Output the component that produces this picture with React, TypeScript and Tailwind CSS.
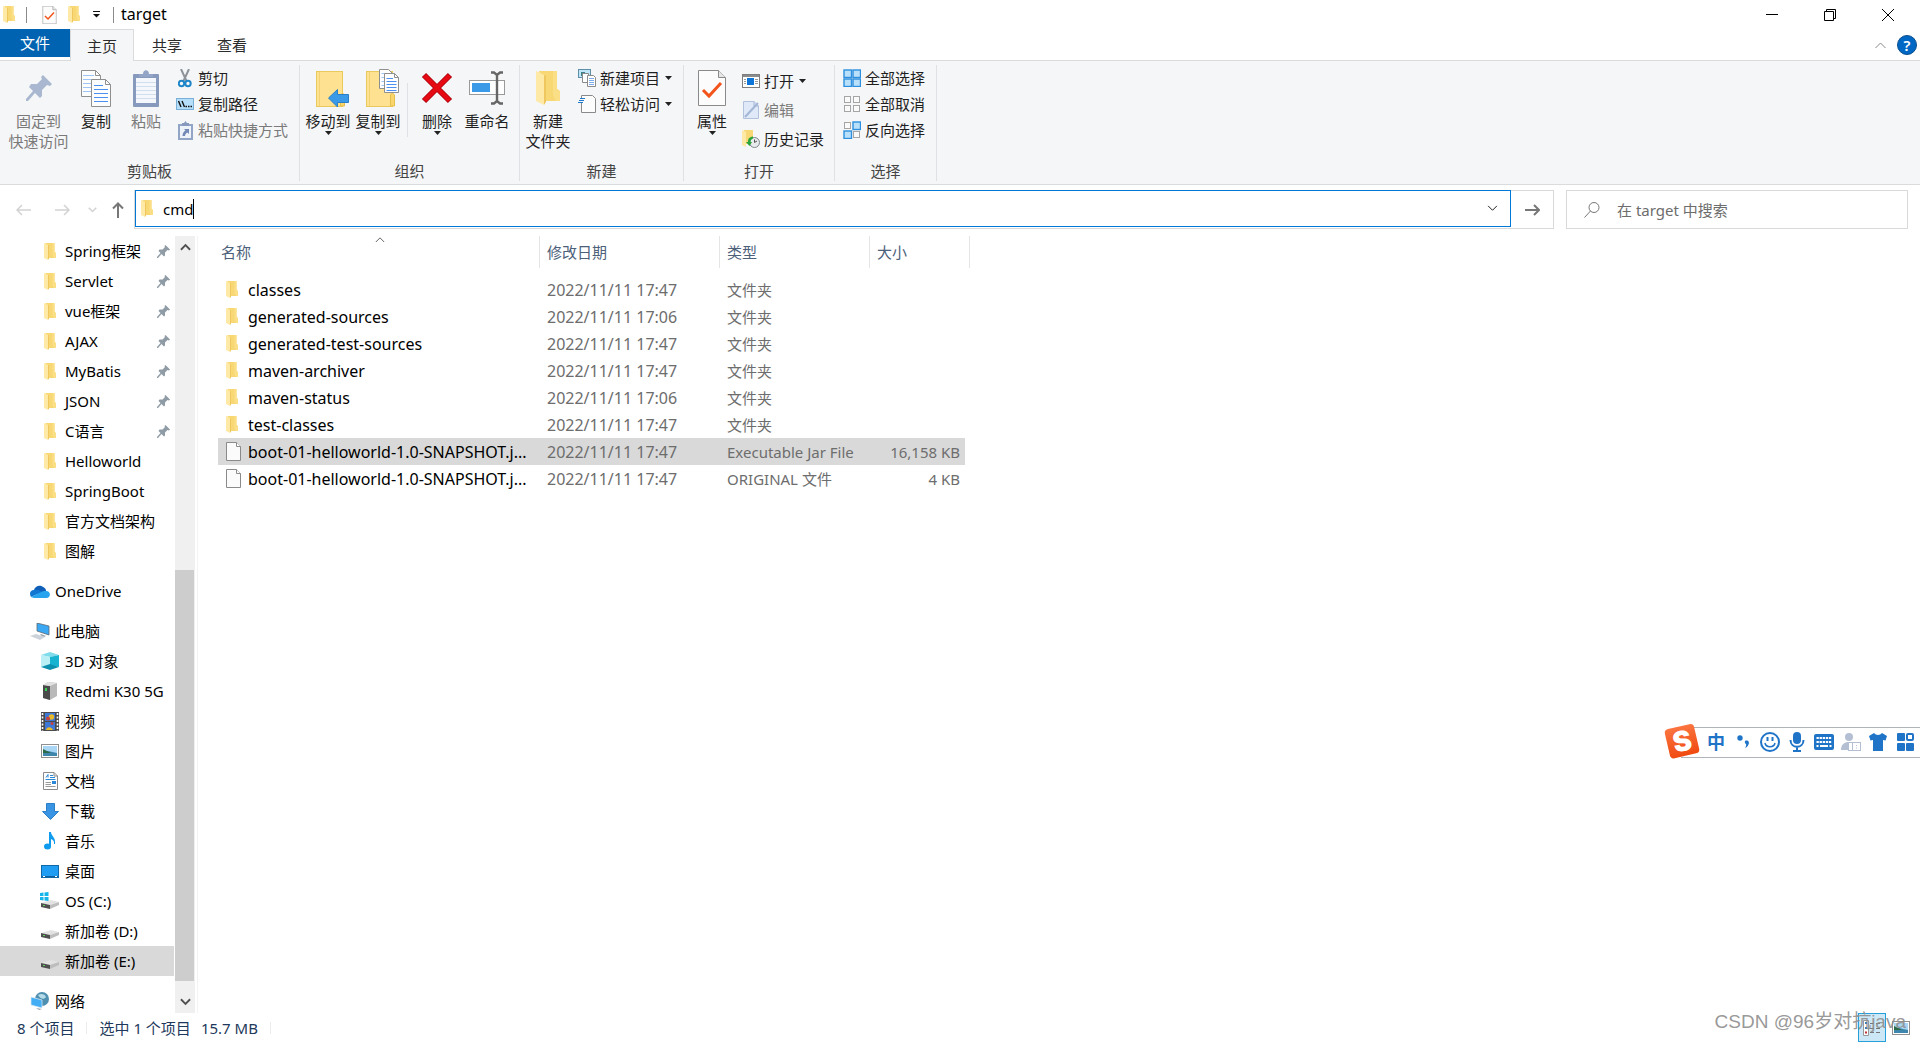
import { useState, type ReactNode } from "react";

type NavItem = {
    name: string;
    icon: ReactNode;
    pinned?: boolean;
    root?: boolean;
    active?: boolean;
};

type FileRow = {
    name: string;
    date: string;
    type: string;
    size?: string;
    selected?: boolean;
};

/* ---------- icons ---------- */

function FolderIcon({ className = "w-3 h-[17px]" }: { className?: string }) {
    return (
        <svg viewBox="0 0 24 34" className={className}>
            <path d="M3 0H21V18L24 20V30H8Z" fill="#f8d775" />
            <path d="M17 0H21V18L24 20V30H20L17 24Z" fill="#fbdf87" />
            <path d="M0 0L8 4V34L0 30Z" fill="#ffe9a6" />
            <path d="M8 4V34L10 31V5Z" fill="#efc75e" />
        </svg>
    );
}

function FileIcon() {
    return (
        <svg viewBox="0 0 15 19" className="w-[15px] h-[19px]">
            <path d="M.5 .5H10.5L14.5 4.5V18.5H.5Z" fill="#fbfbfb" stroke="#8a8a8a" />
            <path d="M10.5 .5V4.5H14.5" fill="#fff" stroke="#8a8a8a" />
        </svg>
    );
}

function PinIcon({ className }: { className: string }) {
    return (
        <svg viewBox="0 0 26 26" className={className} fill="currentColor">
            <path d="M17 0L26 9L24 11L21 10L16 15L16 21L14 23L9 18L2 26L0 26L0 24L7 16L3 12L5 9L11 9L16 4L15 2Z" />
        </svg>
    );
}

function CheckDocIcon({ className }: { className: string }) {
    return (
        <svg viewBox="0 0 28 36" className={className}>
            <path d="M.5 .5H20.5L27.5 7.5V35.5H.5Z" fill="#fcfcfc" stroke="#8a8a8a" />
            <path d="M20.5 .5V7.5H27.5" fill="#e6e6e6" stroke="#8a8a8a" />
            <path d="M5 20L11 26L23 13" fill="none" stroke="#f2541b" strokeWidth="3" />
        </svg>
    );
}

function CopyIcon() {
    return (
        <svg viewBox="0 0 30 37" className="w-[30px] h-[37px]">
            <path d="M.5 .5H14.5L19.5 5.5V26.5H.5Z" fill="#fdfdfd" stroke="#8f8f8f" />
            <path d="M14.5 .5V5.5H19.5" fill="none" stroke="#8f8f8f" />
            <path d="M2 5.500H13M2 9.500H16M2 13.500H10M2 17.500H10M2 21.500H10" stroke="#9fc3f7" />
            <path d="M10.5 9.5H24.5L29.5 14.5V36.5H10.5Z" fill="#fdfdfd" stroke="#8f8f8f" />
            <path d="M24.5 9.5V14.5H29.5" fill="none" stroke="#8f8f8f" />
            <path d="M13 15.5H22M13 19.5H27M13 23.5H27M13 27.5H27M13 31.5H27" stroke="#4a90f0" />
        </svg>
    );
}

function PasteIcon() {
    return (
        <svg viewBox="0 0 26 37" className="w-[26px] h-[37px]">
            <rect x="0" y="4" width="26" height="33" rx="1" fill="#8799bd" />
            <rect x="3" y="8" width="20" height="25" fill="#f4f7fb" />
            <path d="M3 12.5H23M3 16.5H23M3 20.5H23M3 24.5H23M3 28.5H23" stroke="#d3deed" />
            <path d="M6 7V4H10C10 -1 16 -1 16 4H20V7Z" fill="#93a5c6" />
        </svg>
    );
}

function CutIcon() {
    return (
        <svg viewBox="0 0 14 19" className="w-[14px] h-[19px]" fill="none">
            <path d="M3 0L8.5 12M11 0L5.5 12" stroke="#8d9399" strokeWidth="2" />
            <circle cx="3.5" cy="14.5" r="2.7" stroke="#1f86c9" strokeWidth="2" />
            <circle cx="10" cy="14.5" r="2.7" stroke="#1f86c9" strokeWidth="2" />
        </svg>
    );
}

function CopyPathIcon() {
    return (
        <svg viewBox="0 0 18 12" className="w-[18px] h-3">
            <rect x=".5" y=".5" width="17" height="11" fill="#b5defa" stroke="#7ab0d8" />
            <path d="M2.5 3L5 9M6 3L8.5 9" stroke="#111" strokeWidth="1.4" />
            <path d="M9.5 8.5H11M12 8.5H13.5M14.5 8.5H16" stroke="#111" strokeWidth="1.4" />
        </svg>
    );
}

function PasteLinkIcon() {
    return (
        <svg viewBox="0 0 15 19" className="w-[15px] h-[19px]">
            <rect x="0" y="3" width="15" height="16" fill="#93a5c6" />
            <rect x="2" y="5" width="11" height="12" fill="#eef3fa" />
            <path d="M4 5V2H6L7.5 0L9 2H11V5Z" fill="#8799bd" />
            <path d="M6 8H11V13L9.5 11.5C7.5 12.5 7 14 7 15H4.5C4.5 12 6 10.5 7.5 9.5Z" fill="#7288b5" />
        </svg>
    );
}

// the folder sits right of the button's middle, so the box has spare room on the left
function ClosedFolder({ children }: { children: ReactNode }) {
    return (
        <svg viewBox="-8 0 41 40" className="w-[41px] h-10">
            <rect x=".5" y="3.5" width="26" height="35" fill="#fee292" stroke="#e9c95b" />
            <path d="M3.5 4V38" stroke="#f3d273" />
            <path d="M24.5 38V27L26.5 25L28.5 27V38Z" fill="#f9d66c" stroke="#e6c04d" />
            {children}
        </svg>
    );
}

function MoveToIcon() {
    return (
        <ClosedFolder>
            <path d="M12.5 30L21.5 21.5V26.5H32.5V34.5H21.5V39Z" fill="#3a9ae8" stroke="#2b7fc6" />
        </ClosedFolder>
    );
}

function CopyToIcon() {
    return (
        <ClosedFolder>
            <path d="M13.5 1.5H22.5L26.5 5.5V20.5H13.5Z" fill="#fff" stroke="#8f8f8f" />
            <path d="M15.5 5.5H20M15.5 9.5H18M15.5 13.5H18M15.5 17.5H18" stroke="#9fc3f7" />
            <path d="M18.5 5.5H28.5L32.5 9.5V24.5H18.5Z" fill="#fff" stroke="#8f8f8f" />
            <path d="M28.5 5.5V9.5H32.5" fill="none" stroke="#8f8f8f" />
            <path d="M20.5 10.5H27M20.5 13.5H30.5M20.5 16.5H30.5M20.5 19.5H30.5M20.5 22.5H30.5" stroke="#4a90f0" />
        </ClosedFolder>
    );
}

function DeleteIcon() {
    return (
        <svg viewBox="0 0 32 32" className="w-8 h-8">
            <path d="M3 3L29 29M29 3L3 29" stroke="#a80010" strokeWidth="6" />
            <path d="M3.5 3.5L28.5 28.5M28.5 3.5L3.5 28.5" stroke="#e60a12" strokeWidth="4.5" />
        </svg>
    );
}

function RenameIcon() {
    return (
        <svg viewBox="0 0 36 34" className="w-9 h-[34px]" fill="none">
            <rect x=".5" y="9.5" width="35" height="14" fill="#fff" stroke="#9a9a9a" />
            <rect x="3" y="12" width="18" height="9" fill="#3a9ae8" />
            <path d="M28 3V31M22 1.5H25L28 4L31 1.5H34M22 32.5H25L28 30L31 32.5H34" stroke="#666" strokeWidth="2.4" />
        </svg>
    );
}

function NewItemIcon() {
    return (
        <svg viewBox="0 0 18 18" className="w-[18px] h-[18px]">
            <rect x=".5" y=".5" width="12" height="8" fill="#bfe6f7" stroke="#5f8fa8" />
            <rect x="3" y="3" width="4" height="4" fill="#3c7f86" />
            <path d="M4.5 4.5H10.5V13.5H4.5Z" fill="#fff" stroke="#8a8a8a" />
            <path d="M9.5 6.5H15.5L17.5 8.5V17.5H9.5Z" fill="#fff" stroke="#8a8a8a" />
            <path d="M11 9.5H16M11 11.5H16M11 13.5H16M11 15.5H16" stroke="#7cabe8" />
        </svg>
    );
}

function EasyAccessIcon() {
    return (
        <svg viewBox="0 0 18 18" className="w-[18px] h-[18px]">
            <path d="M3.5 .5H14.5L17.5 3.5V17.5H3.5Z" fill="#fcfcfc" stroke="#8a8a8a" />
            <rect x="0" y="3" width="5" height="5" fill="#f5f6f7" />
            <path d="M2 3.5H7M1 5.5H6M0 7.5H5" stroke="#1f78c8" strokeWidth="1.2" />
        </svg>
    );
}

function OpenIcon() {
    return (
        <svg viewBox="0 0 18 14" className="w-[18px] h-[14px]">
            <rect x=".5" y=".5" width="17" height="13" fill="#fff" stroke="#7d7d7d" />
            <path d="M1 2H17" stroke="#8c8c8c" strokeWidth="2" />
            <path d="M2 5.5H4M2 7.5H4M2 9.5H4M13 5.5H16M13 7.5H16M13 9.5H16" stroke="#9a9a9a" />
            <rect x="5" y="4" width="7" height="7" fill="#0d74d8" />
        </svg>
    );
}

function EditIcon() {
    return (
        <svg viewBox="0 0 16 18" className="w-4 h-[18px]">
            <path d="M.5 .5H11L15.5 5V17.5H.5Z" fill="#dfe9f7" stroke="#b2c2dc" />
            <path d="M11 .5V5H15.5" fill="none" stroke="#a6b8d6" />
            <path d="M2 16L15 2" stroke="#a3b6d6" strokeWidth="2" />
        </svg>
    );
}

function HistoryIcon() {
    return (
        <svg viewBox="0 0 18 18" className="w-[18px] h-[18px]">
            <path d="M2 0H11V14H2Z" fill="#f8d775" />
            <path d="M0 0L4 2V17L0 15Z" fill="#ffe9a6" />
            <circle cx="12.5" cy="12.5" r="5" fill="#e8eaec" stroke="#7e868c" />
            <path d="M12.5 9.5V12.5L15 11" fill="none" stroke="#555" />
            <path d="M11 6.5C7 7 6 9 6 12L4 12L7.5 16L10 12H8.5C8.5 10 9.5 9 11 8.5Z" fill="#2aa33a" />
        </svg>
    );
}

// on: which of the four tiles are highlighted
function TilesIcon({ on }: { on: number[] }) {
    const cells = [[1, 1], [10, 1], [1, 10], [10, 10]];
    return (
        <svg viewBox="0 0 18 18" className="w-[18px] h-[18px]">
            {cells.map(([x, y], i) =>
                on.includes(i) ? (
                    <rect key={i} x={x} y={y} width="7.5" height="7.5" fill="#b9e0fb" stroke="#2d8fdd" strokeWidth="1.4" />
                ) : (
                    <rect key={i} x={x + 0.5} y={y + 0.5} width="6" height="6" fill="#fafafa" stroke="#a5a5a5" />
                )
            )}
        </svg>
    );
}

function Caret({ className = "" }: { className?: string }) {
    return (
        <svg viewBox="0 0 7 4" className={`w-[7px] h-1 ${className}`}>
            <path d="M0 0H7L3.5 4Z" fill="#222" />
        </svg>
    );
}

function Chevron({ d, className }: { d: string; className: string }) {
    return (
        <svg viewBox="0 0 12 8" className={className} fill="none" stroke="currentColor">
            <path d={d} />
        </svg>
    );
}
const UP = "M1 7L6 2L11 7";
const DOWN = "M1 1L6 6L11 1";

function DriveIcon({ windows }: { windows?: boolean }) {
    return (
        <svg viewBox="0 0 18 18" className="w-[18px] h-[18px] overflow-visible">
            <path d="M0 11L10 8L18 10L9 13Z" fill="#e2e2e2" />
            <path d="M0 11L9 13V17L0 15Z" fill="#4f4f4f" />
            <path d="M9 13L18 10V13L9 17Z" fill="#bdbdbd" />
            <path d="M2 13.5H4" stroke="#5fd06a" />
            {windows && (
                <path d="M-1 1L2.500 .5V4H-1ZM3.500 .4L7.500 0V4H3.500ZM-1 5H2.500V8.500L-1 8ZM3.500 5H7.500V9L3.500 8.500Z" fill="#13b5ea" />
            )}
        </svg>
    );
}

const cloudIcon = (
    <svg viewBox="0 0 20 13" className="w-5 h-[13px] shrink-0">
        <path d="M4 5C5 1 10 -1 14 2.5C16 4 16 5 16 6L8 9Z" fill="#0f5fb8" />
        <path d="M4 5C0 5 -1 9 1 12L12 7C9 4.5 6 4.3 4 5Z" fill="#1177d1" />
        <path d="M1 12C3 14 16 13 17 13C21 12 21 6 16 6C13 5.5 11 7 9 8Z" fill="#28a4ee" />
    </svg>
);

const pcIcon = (
    <svg viewBox="0 0 20 17" className="w-5 h-[17px] shrink-0">
        <path d="M7 0L19 3V12L7 8Z" fill="#3aa8f2" stroke="#5e6a75" strokeWidth=".8" />
        <path d="M11 11L16 13L14 14L10 12Z" fill="#9aa4ad" />
        <path d="M0 13L6 11L15 14L10 17Z" fill="#ccd3da" />
    </svg>
);

const cubeIcon = (
    <svg viewBox="0 0 18 18" className="w-[18px] h-[18px]">
        <path d="M0 3L9 0L18 3L9 5Z" fill="#7fdcea" />
        <path d="M0 3L9 5V13L0 15Z" fill="#b9eff5" />
        <path d="M18 3L9 5V13L18 15Z" fill="#19b3d2" />
        <path d="M0 15L9 12L18 15L9 18Z" fill="#0d8fae" />
    </svg>
);

const phoneIcon = (
    <svg viewBox="0 0 14 18" className="w-[14px] h-[18px]">
        <path d="M0 3L5 0L14 1V14L7 18L0 16Z" fill="#b9b9b9" />
        <path d="M0 3L7 4V18L0 16Z" fill="#4a4a4a" />
        <path d="M0 3L5 0L14 1L7 4Z" fill="#e2e2e2" />
        <rect x="2" y="6" width="2" height="3" fill="#36d058" />
    </svg>
);

const videoIcon = (
    <svg viewBox="0 0 18 19" className="w-[18px] h-[19px]">
        <rect width="18" height="19" fill="#4b4b4b" />
        <path d="M1.5 1V19M16.5 1V19" stroke="#fff" strokeWidth="1.6" strokeDasharray="2 1.5" />
        <rect x="4" y="1" width="10" height="8" fill="#3c78d8" />
        <rect x="4" y="10" width="10" height="8" fill="#3c78d8" />
        <circle cx="10.5" cy="5" r="2.7" fill="#e9b92a" />
        <circle cx="7" cy="6.5" r="2" fill="#c9403a" />
        <circle cx="11" cy="11.5" r="1.5" fill="#c9403a" />
        <path d="M5 18C6 14 11 15 12 18Z" fill="#e9b92a" />
    </svg>
);

const pictureIcon = (
    <svg viewBox="0 0 18 14" className="w-[18px] h-[14px] shrink-0">
        <rect x=".5" y=".5" width="17" height="13" fill="#fff" stroke="#8f8f8f" />
        <rect x="2" y="2" width="14" height="10" fill="#a9d6f5" />
        <path d="M2 7L7 7L16 9V12H2Z" fill="#3f86ad" />
        <path d="M2 5L10 9L2 9Z" fill="#2d6a48" />
    </svg>
);

const docIcon = (
    <svg viewBox="0 0 15 18" className="w-[15px] h-[18px]">
        <path d="M.5 .5H11L14.5 4V17.5H.5Z" fill="#fff" stroke="#8a8a8a" />
        <path d="M11 .5V4H14.5" fill="none" stroke="#8a8a8a" />
        <path d="M3 5.5L5 2.5V5.5M7 3.5H10M7 5.5H12M2.5 7.5H12.5" stroke="#2b88d8" fill="none" />
        <path d="M2.5 10.5H8M2.5 12.5H8M2.5 14.5H12.5" stroke="#9a9a9a" />
        <rect x="9" y="9" width="4" height="3" fill="#2b88d8" />
    </svg>
);

const downloadIcon = (
    <svg viewBox="0 0 17 17" className="w-[17px] h-[17px]">
        <path d="M4.5 .5H12.5V8.5H16.5L8.5 16.5L.5 8.5H4.5Z" fill="#3a94e4" stroke="#2b7fc6" />
    </svg>
);

const musicIcon = (
    <svg viewBox="0 0 12 18" className="w-3 h-[18px]">
        <ellipse cx="3.5" cy="14.5" rx="3.5" ry="3" fill="#0f9bee" />
        <path d="M5 0H7C7 4 12 5 11 12H10C10.5 9 9 8 7 7V15H5Z" fill="#0f9bee" />
    </svg>
);

const desktopIcon = (
    <svg viewBox="0 0 18 13" className="w-[18px] h-[13px]">
        <rect x=".5" y=".5" width="17" height="12" fill="#1e9df2" stroke="#1269a8" />
        <path d="M1 11.5H17" stroke="#0f5f9c" />
        <path d="M2 11.5H4M14 11.5H16" stroke="#fff" />
    </svg>
);

const networkIcon = (
    <svg viewBox="0 0 20 18" className="w-5 h-[18px] shrink-0">
        <circle cx="12" cy="7" r="7" fill="#4f8fb0" />
        <path d="M8 3C11 1 15 2 16 5C14 8 10 7 8 3Z" fill="#b5dbe8" />
        <path d="M1 5L12 8V16L1 13Z" fill="#43aef3" stroke="#e3edf3" strokeWidth=".7" />
        <path d="M6 16L12 17L9 18Z" fill="#9aa4ad" />
    </svg>
);

/* ---------- data ---------- */

const folder = <FolderIcon />;

const navGroups: NavItem[][] = [
    [
        { name: "Spring框架", icon: folder, pinned: true },
        { name: "Servlet", icon: folder, pinned: true },
        { name: "vue框架", icon: folder, pinned: true },
        { name: "AJAX", icon: folder, pinned: true },
        { name: "MyBatis", icon: folder, pinned: true },
        { name: "JSON", icon: folder, pinned: true },
        { name: "C语言", icon: folder, pinned: true },
        { name: "Helloworld", icon: folder },
        { name: "SpringBoot", icon: folder },
        { name: "官方文档架构", icon: folder },
        { name: "图解", icon: folder },
    ],
    [{ name: "OneDrive", icon: cloudIcon, root: true }],
    [
        { name: "此电脑", icon: pcIcon, root: true },
        { name: "3D 对象", icon: cubeIcon },
        { name: "Redmi K30 5G", icon: phoneIcon },
        { name: "视频", icon: videoIcon },
        { name: "图片", icon: pictureIcon },
        { name: "文档", icon: docIcon },
        { name: "下载", icon: downloadIcon },
        { name: "音乐", icon: musicIcon },
        { name: "桌面", icon: desktopIcon },
        { name: "OS (C:)", icon: <DriveIcon windows /> },
        { name: "新加卷 (D:)", icon: <DriveIcon /> },
        { name: "新加卷 (E:)", icon: <DriveIcon />, active: true },
    ],
    [{ name: "网络", icon: networkIcon, root: true }],
];

const files: FileRow[] = [
    { name: "classes", date: "2022/11/11 17:47", type: "文件夹" },
    { name: "generated-sources", date: "2022/11/11 17:06", type: "文件夹" },
    { name: "generated-test-sources", date: "2022/11/11 17:47", type: "文件夹" },
    { name: "maven-archiver", date: "2022/11/11 17:47", type: "文件夹" },
    { name: "maven-status", date: "2022/11/11 17:06", type: "文件夹" },
    { name: "test-classes", date: "2022/11/11 17:47", type: "文件夹" },
    {
        name: "boot-01-helloworld-1.0-SNAPSHOT.j...",
        date: "2022/11/11 17:47",
        type: "Executable Jar File",
        size: "16,158 KB",
        selected: true,
    },
    {
        name: "boot-01-helloworld-1.0-SNAPSHOT.j...",
        date: "2022/11/11 17:47",
        type: "ORIGINAL 文件",
        size: "4 KB",
    },
];

/* ---------- ribbon ---------- */

function BigButton({
    icon,
    lines,
    menu,
    disabled,
    className = "w-[50px]",
}: {
    icon: ReactNode;
    lines: string[];
    menu?: boolean;
    disabled?: boolean;
    className?: string;
}) {
    return (
        <button
            disabled={disabled}
            className={`flex flex-col items-center shrink-0 whitespace-nowrap leading-5 disabled:text-[#7a7a7a] ${className}`}
        >
            <span className="h-[46px] flex items-center justify-center">{icon}</span>
            {lines.map((line) => (
                <span key={line}>{line}</span>
            ))}
            {menu && <Caret />}
        </button>
    );
}

function SmallButton({
    icon,
    label,
    menu,
    disabled,
}: {
    icon: ReactNode;
    label: string;
    menu?: boolean;
    disabled?: boolean;
}) {
    return (
        <button disabled={disabled} className="flex items-center gap-1 h-[26px] whitespace-nowrap disabled:text-[#7a7a7a]">
            <span className="w-[18px] flex justify-center shrink-0">{icon}</span>
            {label}
            {menu && <Caret className="ml-px" />}
        </button>
    );
}

function RibbonGroup({
    title,
    className,
    pad = "pl-[3px]",
    children,
}: {
    title: string;
    className: string;
    pad?: string;
    children: ReactNode;
}) {
    return (
        <section className={`flex flex-col shrink-0 border-r border-[#dfe1e4] ${className}`}>
            <div className={`flex flex-1 ${pad}`}>{children}</div>
            <h2 className="h-5 leading-5 text-center text-[#444]">{title}</h2>
        </section>
    );
}

function Ribbon() {
    return (
        <div className="flex h-[125px] pt-1 pb-[3px] bg-[#f5f6f7] border-y border-[#dadbdc] text-[#1f1f1f]">
            <RibbonGroup title="剪贴板" className="w-[300px]" pad="pl-[6px]">
                <BigButton disabled className="w-[65px]" icon={<PinIcon className="w-[26px] h-[26px] text-[#a9b8d0]" />} lines={["固定到", "快速访问"]} />
                <BigButton icon={<CopyIcon />} lines={["复制"]} />
                <BigButton disabled icon={<PasteIcon />} lines={["粘贴"]} />
                <div className="pl-[5px]">
                    <SmallButton icon={<CutIcon />} label="剪切" />
                    <SmallButton icon={<CopyPathIcon />} label="复制路径" />
                    <SmallButton disabled icon={<PasteLinkIcon />} label="粘贴快捷方式" />
                </div>
            </RibbonGroup>
            <RibbonGroup title="组织" className="w-[220px]">
                <BigButton menu icon={<MoveToIcon />} lines={["移动到"]} />
                <BigButton menu icon={<CopyToIcon />} lines={["复制到"]} />
                <div className="w-px h-[54px] mt-[18px] mx-1 bg-[#dfe1e4]" />
                <BigButton menu icon={<DeleteIcon />} lines={["删除"]} />
                <BigButton icon={<RenameIcon />} lines={["重命名"]} />
            </RibbonGroup>
            <RibbonGroup title="新建" className="w-[164px]">
                <BigButton icon={<FolderIcon className="w-6 h-[34px]" />} lines={["新建", "文件夹"]} />
                <div className="pl-[5px]">
                    <SmallButton menu icon={<NewItemIcon />} label="新建项目" />
                    <SmallButton menu icon={<EasyAccessIcon />} label="轻松访问" />
                </div>
            </RibbonGroup>
            <RibbonGroup title="打开" className="w-[151px]">
                <BigButton menu icon={<CheckDocIcon className="w-7 h-9" />} lines={["属性"]} />
                <div className="flex flex-col gap-[3px] pl-[5px] pt-[3px]">
                    <SmallButton menu icon={<OpenIcon />} label="打开" />
                    <SmallButton disabled icon={<EditIcon />} label="编辑" />
                    <SmallButton icon={<HistoryIcon />} label="历史记录" />
                </div>
            </RibbonGroup>
            <RibbonGroup title="选择" className="w-[102px]" pad="pl-2">
                <div>
                    <SmallButton icon={<TilesIcon on={[0, 1, 2, 3]} />} label="全部选择" />
                    <SmallButton icon={<TilesIcon on={[]} />} label="全部取消" />
                    <SmallButton icon={<TilesIcon on={[1, 2]} />} label="反向选择" />
                </div>
            </RibbonGroup>
        </div>
    );
}

/* ---------- window parts ---------- */

function TitleBar() {
    return (
        <header className="flex items-center h-[29px] shrink-0 pl-[3px] pr-[3px]">
            <FolderIcon />
            <span className="w-px h-4 ml-[11px] bg-[#8a8a8a]" />
            <button aria-label="属性" className="ml-[15px]">
                <CheckDocIcon className="w-[15px] h-[18px]" />
            </button>
            <button aria-label="新建文件夹" className="ml-[11px]">
                <FolderIcon />
            </button>
            <button aria-label="自定义快速访问工具栏" className="ml-[13px]">
                <svg viewBox="0 0 7 7" className="w-[7px] h-[7px]">
                    <path d="M0 .5H7" stroke="#111" />
                    <path d="M0 3H7L3.5 6.5Z" fill="#111" />
                </svg>
            </button>
            <span className="w-px h-4 ml-[13px] bg-[#8a8a8a]" />
            <h1 className="ml-[7px] pb-px text-base leading-5">target</h1>
            <div className="flex ml-auto h-full">
                <button aria-label="最小化" className="w-[58px] flex items-center justify-center">
                    <svg viewBox="0 0 12 12" className="w-3 h-3" stroke="#000">
                        <path d="M0 5.5H12" />
                    </svg>
                </button>
                <button aria-label="还原" className="w-[58px] flex items-center justify-center">
                    <svg viewBox="0 0 12 12" className="w-3 h-3" stroke="#000" fill="none">
                        <path d="M.5 2.5H9.5V11.5H.5ZM2.5 2.5V.5H11.5V9.5H9.5" />
                    </svg>
                </button>
                <button aria-label="关闭" className="w-[58px] flex items-center justify-center">
                    <svg viewBox="0 0 12 12" className="w-3 h-3" stroke="#000">
                        <path d="M0 0L12 12M12 0L0 12" />
                    </svg>
                </button>
            </div>
        </header>
    );
}

function TabBar() {
    return (
        <nav className="relative flex h-8 shrink-0 -mb-px text-[#2b2b2b]">
            <button className="w-[70px] h-7 bg-[#0063b1] text-white">文件</button>
            <button className="w-16 h-8 bg-[#f5f6f7] border border-b-0 border-[#dadbdc]">主页</button>
            <button className="w-[66px] h-[31px]">共享</button>
            <button className="w-16 h-[31px]">查看</button>
            <div className="flex items-center gap-[10px] ml-auto pr-[3px]">
                <button aria-label="最小化功能区">
                    <Chevron d={UP} className="w-[13px] h-2 text-[#888]" />
                </button>
                <button aria-label="帮助" className="w-5 h-5 rounded-full bg-[#0067c5] border border-[#0b4f8c] text-white font-semibold leading-[18px]">
                    ?
                </button>
            </div>
        </nav>
    );
}

function AddressBar() {
    const [path, setPath] = useState("cmd");
    const [query, setQuery] = useState("");

    return (
        <div className="flex h-[39px] mt-[5px] pr-3 shrink-0">
            <div className="flex items-center w-[134px] pl-4 text-[#d2d2d2]">
                <button aria-label="后退">
                    <svg viewBox="0 0 15 12" className="w-[15px] h-3" fill="none" stroke="currentColor" strokeWidth="1.5">
                        <path d="M1 6H15M6 1L1 6L6 11" />
                    </svg>
                </button>
                <button aria-label="前进" className="ml-6">
                    <svg viewBox="0 0 15 12" className="w-[15px] h-3" fill="none" stroke="currentColor" strokeWidth="1.5">
                        <path d="M0 6H14M9 1L14 6L9 11" />
                    </svg>
                </button>
                <button aria-label="最近浏览的位置" className="ml-[18px]">
                    <Chevron d={DOWN} className="w-[9px] h-[6px] stroke-2" />
                </button>
                <button aria-label="上移" className="ml-[15px]">
                    <svg viewBox="0 0 12 16" className="w-3 h-4" fill="none" stroke="#777" strokeWidth="2">
                        <path d="M6 1V16M1 6.5L6 1.5L11 6.5" />
                    </svg>
                </button>
            </div>
            <div className="flex flex-1 border-l border-b border-[#d9d9d9] pb-px">
                <div className="flex flex-1 items-center border border-[#0078d7] pl-[5px] pr-3">
                    <FolderIcon />
                    <input
                        aria-label="地址"
                        value={path}
                        onChange={(e) => setPath(e.target.value)}
                        className="ml-[10px] outline-none [field-sizing:content]"
                    />
                    <span className="w-px h-5 bg-black" />
                    <button aria-label="以前的位置" className="ml-auto">
                        <Chevron d={DOWN} className="w-[11px] h-[7px] text-black" />
                    </button>
                </div>
            </div>
            <button aria-label="转到" className="w-[43px] flex items-center justify-center border border-l-0 border-[#d9d9d9]">
                <svg viewBox="0 0 15 12" className="w-[15px] h-3" fill="none" stroke="#777" strokeWidth="2">
                    <path d="M0 6H14M9 1L14 6L9 11" />
                </svg>
            </button>
            <div className="flex items-center w-[342px] ml-3 pl-[17px] border border-[#d9d9d9]">
                <svg viewBox="0 0 16 16" className="w-4 h-4" fill="none" stroke="#777">
                    <circle cx="10" cy="5.5" r="5" />
                    <path d="M6.5 9L.5 15.5" />
                </svg>
                <input
                    aria-label="搜索"
                    placeholder="在 target 中搜索"
                    value={query}
                    onChange={(e) => setQuery(e.target.value)}
                    className="flex-1 ml-[17px] outline-none placeholder:text-[#6d6d6d]"
                />
            </div>
        </div>
    );
}

function Sidebar() {
    return (
        <aside className="flex w-[198px] shrink-0 border-r border-[#f3f3f3]">
            <div className="flex flex-col gap-[10px] w-[174px] shrink-0">
                {navGroups.map((group, i) => (
                    <ul key={i}>
                        {group.map((item) => (
                            <li key={item.name}>
                                <button
                                    className={`flex items-center w-full h-[30px] gap-[6px] pr-1 whitespace-nowrap ${
                                        item.root ? "pl-[31px]" : "pl-[41px]"
                                    } ${item.active ? "bg-[#d9d9d9]" : ""}`}
                                >
                                    <span className="w-[18px] flex justify-center shrink-0">{item.icon}</span>
                                    {item.name}
                                    {item.pinned && <PinIcon className="w-[13px] h-[13px] ml-auto text-[#8f9ba5]" />}
                                </button>
                            </li>
                        ))}
                    </ul>
                ))}
            </div>
            <div className="flex flex-col items-center w-5 ml-px bg-[#f0f0f0] text-[#505050]">
                <button aria-label="向上滚动" className="h-[22px] shrink-0">
                    <Chevron d={UP} className="w-[11px] h-2 stroke-2" />
                </button>
                <div className="w-full flex-1 flex flex-col">
                    <div className="flex-[312]" />
                    <div className="flex-[411] w-[19px] bg-[#cdcdcd]" />
                    <div className="flex-[10]" />
                </div>
                <button aria-label="向下滚动" className="h-[22px] shrink-0">
                    <Chevron d={DOWN} className="w-[11px] h-2 stroke-2" />
                </button>
            </div>
        </aside>
    );
}

function HeadCell({ label, className, sorted, span }: { label: string; className: string; sorted?: boolean; span?: number }) {
    return (
        <th colSpan={span} className={`h-10 p-0 align-top font-normal text-left text-[#4c607a] ${className}`}>
            <div className="relative h-8 leading-8 border-r border-[#e5e5e5]">
                {label}
                {sorted && <Chevron d={UP} className="absolute left-1/2 top-0 -translate-x-1/2 w-[10px] h-[7px] text-[#444]" />}
            </div>
        </th>
    );
}

function FileTable() {
    return (
        <main className="flex-1 pl-5">
            <table className="table-fixed w-[752px] whitespace-nowrap text-[#6d6d6d]">
                <colgroup>
                    <col className="w-[322px]" />
                    <col className="w-[180px]" />
                    <col className="w-[150px]" />
                    <col className="w-[95px]" />
                    <col className="w-[5px]" />
                </colgroup>
                <thead>
                    <tr>
                        <HeadCell label="名称" className="pl-[3px]" sorted />
                        <HeadCell label="修改日期" className="pl-[7px]" />
                        <HeadCell label="类型" className="pl-[7px]" />
                        <HeadCell label="大小" className="pl-[7px]" span={2} />
                    </tr>
                </thead>
                <tbody>
                    {files.map((file, i) => {
                        const bg = file.selected ? "bg-[#d9d9d9]" : "";
                        return (
                            <tr key={i} className="h-[27px]">
                                <td className={`p-0 pl-2 text-base leading-5 text-black ${bg}`}>
                                    <div className="flex items-center gap-[6px]">
                                        <span className="w-4 shrink-0">{file.size ? <FileIcon /> : <FolderIcon />}</span>
                                        {file.name}
                                    </div>
                                </td>
                                <td className={`p-0 pl-[7px] text-base leading-5 ${bg}`}>{file.date}</td>
                                <td className={`p-0 pl-[7px] ${bg}`}>{file.type}</td>
                                <td className={`p-0 pr-[5px] text-right ${bg}`}>{file.size}</td>
                                <td className="p-0" />
                            </tr>
                        );
                    })}
                </tbody>
            </table>
        </main>
    );
}

function StatusBar() {
    return (
        <footer className="flex items-center h-[29px] shrink-0 pl-[17px] pr-[10px] text-[#1e395b]">
            <span>8 个项目</span>
            <span className="w-px h-3 mx-3 bg-[#ececec]" />
            <span>选中 1 个项目</span>
            <span className="ml-[10px]">15.7 MB</span>
            <span className="w-px h-3 mx-3 bg-[#ececec]" />
            <button aria-label="详细信息" className="flex items-center justify-center w-7 h-[29px] ml-auto bg-[#cce8f6] border border-[#26a0da]">
                <svg viewBox="0 0 18 16" className="w-[18px] h-4">
                    <path d="M.5 .5H5.5V15.5H.5Z" fill="#fff" stroke="#999" />
                    <path d="M2 3H4M2 8H4" stroke="#3a7ac0" strokeWidth="2" />
                    <path d="M2 12.5H4" stroke="#b33" strokeWidth="2" />
                    <path d="M7 3.5H11M13 3.5H17M7 8.5H11M13 8.5H17M7 12.5H11M13 12.5H17" stroke="#777" />
                </svg>
            </button>
            <button aria-label="大缩略图" className="ml-[6px]">
                {pictureIcon}
            </button>
        </footer>
    );
}

// floating input method toolbar docked to the right edge
function ImeBar() {
    const ico = "w-5 h-5";
    return (
        <div className="absolute right-0 top-[724px] flex items-center h-9 text-[#1f74c8]">
            <svg viewBox="0 0 36 36" className="w-9 h-9 z-10 -mr-5 overflow-visible">
                <defs>
                    <linearGradient id="sogou" x1="0" y1="0" x2="0" y2="1">
                        <stop offset="0" stopColor="#fb7440" />
                        <stop offset="1" stopColor="#f04a10" />
                    </linearGradient>
                </defs>
                <g transform="rotate(-13 18 17)">
                    <rect x="2" y="2" width="30" height="30" rx="4" fill="url(#sogou)" />
                    <text x="17" y="27" textAnchor="middle" fontSize="28" fontWeight="900" fill="#fff" fontFamily="Inter, sans-serif">
                        S
                    </text>
                </g>
            </svg>
            <div className="flex items-center gap-[7px] h-[31px] pl-[25px] pr-[5px] bg-white border-y border-[#b0b3b8]">
                <span className="w-5 text-lg leading-5 text-center font-bold">中</span>
                <svg viewBox="0 0 20 20" className={ico} fill="currentColor">
                    <circle cx="7" cy="6" r="2.7" />
                    <path d="M12 9C14.5 7.5 17 9.5 15.5 12.5C14.8 14.2 13.5 15.5 12 16C13 14.5 13.5 13 13 12C12 11.5 11.5 10 12 9Z" />
                </svg>
                <svg viewBox="0 0 20 20" className={ico} fill="none" stroke="currentColor" strokeWidth="2">
                    <circle cx="10" cy="10" r="9" />
                    <path d="M7.5 5V9M12.5 5V9" />
                    <path d="M5 11C6 16 14 16 15 11" strokeWidth="1.5" />
                </svg>
                <svg viewBox="0 0 20 20" className={ico} fill="none" stroke="currentColor" strokeWidth="2">
                    <rect x="6" y="0" width="8" height="12" rx="4" fill="currentColor" stroke="none" />
                    <path d="M3.5 8C3.5 17 16.5 17 16.5 8M10 14.5V19M6 19H14" />
                </svg>
                <svg viewBox="0 0 20 20" className={ico}>
                    <rect x="0" y="2" width="20" height="16" rx="2" fill="currentColor" />
                    <path d="M2.5 6H17.5M2.5 10H17.5" stroke="#fff" strokeWidth="2" strokeDasharray="2.3 .8" />
                    <path d="M2.5 14H4.5M6 14H14M15.5 14H17.5" stroke="#fff" strokeWidth="2" />
                </svg>
                <svg viewBox="0 0 20 20" className={ico}>
                    <circle cx="8" cy="5" r="4" fill="#b4bfd4" />
                    <path d="M0 18C0 11 5 10 8 10H11V18Z" fill="#b4bfd4" />
                    <rect x="7.5" y="10.5" width="12" height="8" fill="#fff" stroke="#b4bfd4" />
                    <path d="M11.5 10.5V18.5M15.5 13V14M15.5 15.5V16.5" stroke="#b4bfd4" />
                </svg>
                <svg viewBox="0 0 20 20" className={ico} fill="currentColor">
                    <path d="M6 1C8 3.5 12 3.5 14 1L19 4L17.5 8.5L15 8V19H5V8L2.5 8.5L1 4Z" />
                </svg>
                <svg viewBox="0 0 20 20" className={ico} fill="currentColor">
                    <rect x="2" y="1" width="8" height="8" rx="1" />
                    <rect x="12" y="2" width="6" height="6" rx="1" fill="none" stroke="currentColor" strokeWidth="2" />
                    <rect x="2" y="11" width="8" height="8" rx="1" />
                    <rect x="11" y="11" width="8" height="8" rx="1" />
                </svg>
            </div>
        </div>
    );
}

export default function App() {
    return (
        <div className="relative flex flex-col h-screen overflow-hidden bg-white text-black text-[15px] leading-5 font-['Noto_Sans','Noto_Sans_CJK_SC',sans-serif]">
            <TitleBar />
            <TabBar />
            <Ribbon />
            <AddressBar />
            <div className="flex flex-1 min-h-0 mt-[7px] overflow-hidden">
                <Sidebar />
                <FileTable />
            </div>
            <StatusBar />
            <ImeBar />
            <p className="absolute right-[14px] bottom-2 text-[19px] leading-6 text-[#8c8c8c]/90 font-['Liberation_Sans','Noto_Sans_CJK_SC',sans-serif] pointer-events-none">
                CSDN @96岁对抗java
            </p>
        </div>
    );
}
